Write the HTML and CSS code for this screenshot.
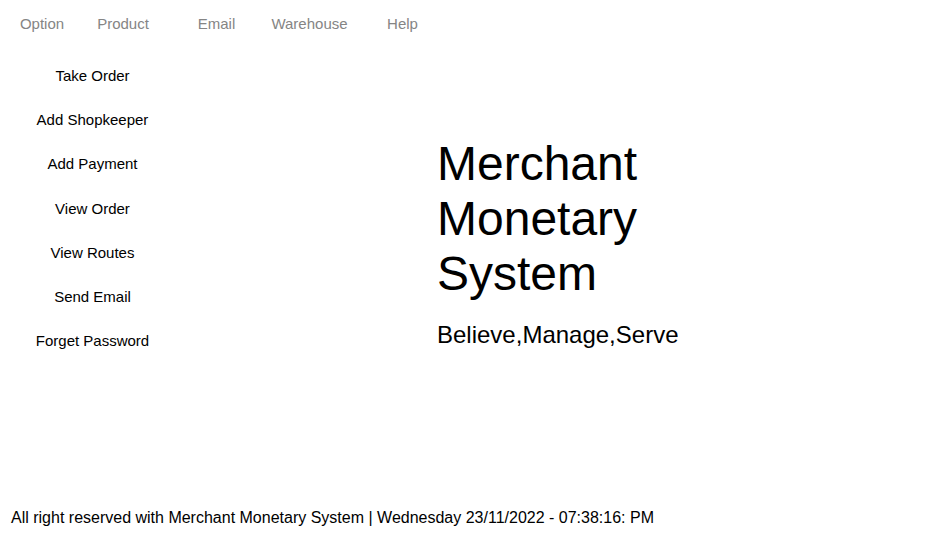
FILE: index.html
```html
<!DOCTYPE html>
<html>
<head>
<meta charset="utf-8">
<link rel="stylesheet" href="styles.css">
</head>
<body>
<div class="page">
  <nav class="topnav">
    <span class="nav-item">Option</span>
    <span class="nav-item">Product</span>
    <span class="nav-item">Email</span>
    <span class="nav-item">Warehouse</span>
    <span class="nav-item">Help</span>
  </nav>
  <div class="content">
    <ul class="sidebar">
      <li>Take Order</li>
      <li>Add Shopkeeper</li>
      <li>Add Payment</li>
      <li>View Order</li>
      <li>View Routes</li>
      <li>Send Email</li>
      <li>Forget Password</li>
    </ul>
    <main class="hero">
      <h1 class="title">Merchant<br>Monetary<br>System</h1>
      <p class="tagline">Believe,Manage,Serve</p>
    </main>
  </div>
  <footer class="footer">All right reserved with Merchant Monetary System | Wednesday 23/11/2022 - 07:38:16: PM</footer>
</div>
</body>
</html>
```

FILE: styles.css
```css
html, body {
  margin: 0;
  padding: 0;
  background: #fff;
}
.page {
  font-family: "Liberation Sans", Arial, sans-serif;
  color: #000;
  height: 540px;
  display: flex;
  flex-direction: column;
}
.topnav {
  display: grid;
  grid-template-columns: 84px 78px 109px 77px 109px;
  height: 46px;
  align-items: center;
  font-size: 15px;
  color: #858585;
}
.nav-item {
  text-align: center;
}
.content {
  display: flex;
  padding-top: 8px;
}
.sidebar {
  list-style: none;
  margin: 0;
  padding: 0;
  width: 185px;
  font-size: 15px;
}
.sidebar li {
  text-align: center;
  line-height: 44.2px;
}
.hero {
  padding-left: 252px;
  padding-top: 82px;
}
.title {
  margin: 0;
  font-size: 48px;
  font-weight: normal;
  line-height: 55px;
}
.tagline {
  margin: 20px 0 0;
  font-size: 24px;
}
.footer {
  margin-top: auto;
  padding: 0 0 13px 11px;
  font-size: 16px;
}
```
